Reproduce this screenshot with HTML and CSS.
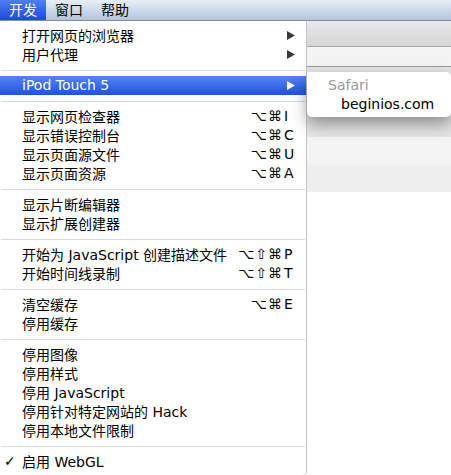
FILE: index.html
```html
<!DOCTYPE html>
<html lang="zh-CN">
<head>
<meta charset="utf-8">
<title>开发菜单</title>
<link rel="stylesheet" href="styles.css">
</head>
<body>
<div class="menubar">
  <span class="mb-item active">开发</span>
  <span class="mb-item">窗口</span>
  <span class="mb-item">帮助</span>
</div>
<div class="screen">
  <div class="menu">
    <div class="item"><span class="label">打开网页的浏览器</span><svg class="arrow" width="8" height="9" viewBox="0 0 8 9"><path d="M0 0L8 4.5L0 9Z"/></svg></div>
    <div class="item"><span class="label">用户代理</span><svg class="arrow" width="8" height="9" viewBox="0 0 8 9"><path d="M0 0L8 4.5L0 9Z"/></svg></div>
    <div class="sep"></div>
    <div class="item selected"><span class="label">iPod Touch 5</span><svg class="arrow" width="8" height="9" viewBox="0 0 8 9"><path d="M0 0L8 4.5L0 9Z"/></svg></div>
    <div class="sep"></div>
    <div class="item"><span class="label">显示网页检查器</span><span class="sc"><span class="mods">⌥⌘</span><span class="key">I</span></span></div>
    <div class="item"><span class="label">显示错误控制台</span><span class="sc"><span class="mods">⌥⌘</span><span class="key">C</span></span></div>
    <div class="item"><span class="label">显示页面源文件</span><span class="sc"><span class="mods">⌥⌘</span><span class="key">U</span></span></div>
    <div class="item"><span class="label">显示页面资源</span><span class="sc"><span class="mods">⌥⌘</span><span class="key">A</span></span></div>
    <div class="sep"></div>
    <div class="item"><span class="label">显示片断编辑器</span></div>
    <div class="item"><span class="label">显示扩展创建器</span></div>
    <div class="sep"></div>
    <div class="item"><span class="label">开始为 JavaScript 创建描述文件</span><span class="sc"><span class="mods">⌥⇧⌘</span><span class="key">P</span></span></div>
    <div class="item"><span class="label">开始时间线录制</span><span class="sc"><span class="mods">⌥⇧⌘</span><span class="key">T</span></span></div>
    <div class="sep"></div>
    <div class="item"><span class="label">清空缓存</span><span class="sc"><span class="mods">⌥⌘</span><span class="key">E</span></span></div>
    <div class="item"><span class="label">停用缓存</span></div>
    <div class="sep"></div>
    <div class="item"><span class="label">停用图像</span></div>
    <div class="item"><span class="label">停用样式</span></div>
    <div class="item"><span class="label">停用 JavaScript</span></div>
    <div class="item"><span class="label">停用针对特定网站的 Hack</span></div>
    <div class="item"><span class="label">停用本地文件限制</span></div>
    <div class="sep"></div>
    <div class="item"><span class="check">✓</span><span class="label">启用 WebGL</span></div>
  </div>
  <div class="backdrop">
    <div class="band toolbar"></div>
    <div class="band addr"></div>
    <div class="band behind"></div>
    <div class="band light"></div>
    <div class="band mid"></div>
    <div class="band page"></div>
  </div>
  <div class="submenu">
    <div class="sub-head">Safari</div>
    <div class="sub-item">beginios.com</div>
  </div>
</div>
</body>
</html>
```
FILE: styles.css
```css
html, body {
  margin: 0;
  padding: 0;
}
body {
  width: 451px;
  height: 475px;
  overflow: hidden;
  background: #fff;
  color: #000;
  font-family: "DejaVu Sans", "Noto Sans CJK SC", sans-serif;
  font-size: 14px;
}
.menubar {
  height: 21px;
  box-sizing: border-box;
  display: flex;
  background: linear-gradient(#e7eef8, #b5c4dc);
  border-bottom: 1px solid #7f8da4;
}
.mb-item {
  padding: 0 9px;
  line-height: 20px;
}
.mb-item.active {
  background: linear-gradient(#4f7ff2, #1b4bdf);
  color: #fff;
}
.screen {
  position: relative;
  display: flex;
  height: 454px;
}
.menu {
  width: 307px;
  flex: none;
  box-sizing: border-box;
  border-right: 1px solid #c6c6c6;
  background: #fff;
  padding-top: 4.5px;
  border-bottom-right-radius: 4px;
}
.item {
  height: 19px;
  display: flex;
  align-items: center;
  padding: 0 11px 0 22px;
  position: relative;
  white-space: nowrap;
}
.item.selected {
  background: linear-gradient(#5784f3, #1f52e3);
  color: #fff;
}
.label {
  flex: 1;
}
.arrow {
  fill: #3a3a3a;
}
.selected .arrow {
  fill: #fff;
}
.check {
  position: absolute;
  left: 4px;
  font-size: 14px;
}
.sc {
  display: flex;
  margin-right: 1px;
  font-size: 14px;
}
.mods {
  letter-spacing: 1px;
  margin-right: -1px;
  text-align: right;
}
.key {
  width: 10px;
  padding-left: 2px;
}
.sep {
  height: 12px;
  box-sizing: border-box;
  padding: 6px 1px 0;
}
.sep::after {
  content: "";
  display: block;
  height: 1px;
  background: #dadada;
}
.backdrop {
  flex: 1;
  display: flex;
  flex-direction: column;
}
.band.toolbar {
  height: 25px;
  background: linear-gradient(#e9e9e9, #d5d5d5);
  border-bottom: 1px solid #a9a9a9;
}
.band.addr {
  height: 19px;
  background: #f3f3f3;
  border-bottom: 1px solid #9a9a9a;
}
.band.behind {
  height: 70px;
  background: #e4e4e4;
}
.band.light {
  height: 28px;
  background: #f4f4f4;
}
.band.mid {
  height: 27px;
  background: #eeeeee;
}
.band.page {
  flex: 1;
  background: #fff;
}
.submenu {
  position: absolute;
  left: 307px;
  top: 51px;
  width: 144px;
  height: 45px;
  box-sizing: border-box;
  padding: 3.5px 0;
  background: #fff;
  border-radius: 0 5px 5px 5px;
  box-shadow: 0 7px 16px rgba(0, 0, 0, 0.38);
}
.sub-head, .sub-item {
  height: 19px;
  line-height: 19px;
  white-space: nowrap;
}
.sub-head {
  padding-left: 21px;
  color: #9a9a9a;
}
.sub-item {
  padding-left: 34px;
}
```
